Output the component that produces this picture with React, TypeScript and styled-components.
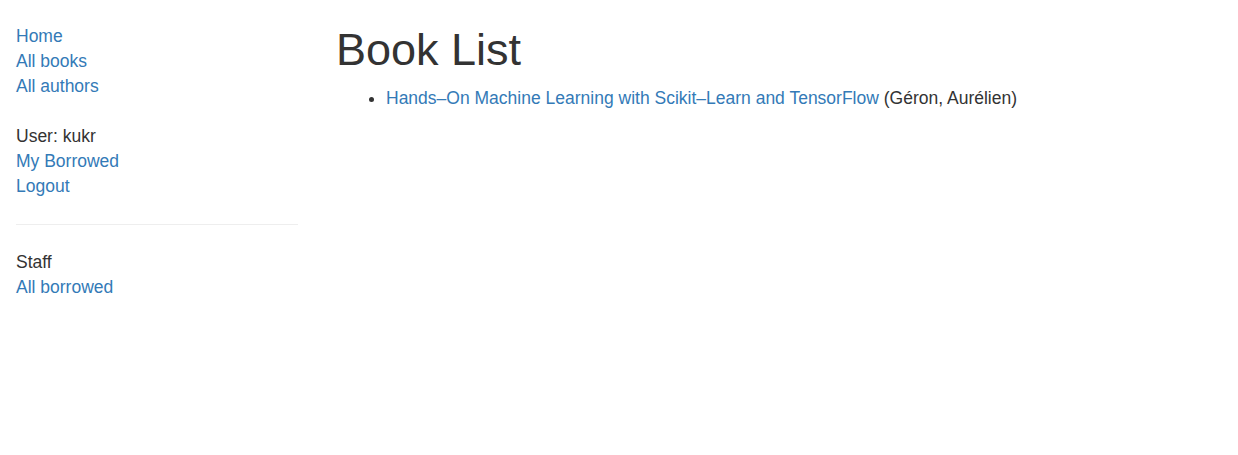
import styled, { createGlobalStyle } from "styled-components";

const GlobalStyle = createGlobalStyle`
  body {
    margin: 0;
    background: #fff;
    color: #333;
    font-family: "Liberation Sans", Arial, sans-serif;
    font-size: 17.5px;
    line-height: 25px;
  }
`;

const Page = styled.div`
  display: flex;
  align-items: flex-start;
`;

const Sidebar = styled.nav`
  width: 282px;
  margin-left: 16px;
  padding-top: 24px;
  flex-shrink: 0;
`;

const NavList = styled.ul`
  list-style: none;
  margin: 0;
  padding: 0;
`;

const Gap = styled.li`
  height: 25px;
`;

const NavLink = styled.a`
  color: #337ab7;
  text-decoration: none;
`;

const Divider = styled.hr`
  margin: 25px 0;
  border: 0;
  border-top: 1px solid #eee;
`;

const Main = styled.main`
  margin-left: 38px;
  flex: 1;
`;

const Title = styled.h1`
  margin: 25px 0 11.5px;
  font-size: 45px;
  font-weight: 500;
  line-height: 49.5px;
`;

const Books = styled.ul`
  margin: 0;
  padding-left: 50px;
`;

const Author = styled.span`
  color: #333;
`;

export default function App() {
  return (
    <>
      <GlobalStyle />
      <Page>
        <Sidebar>
          <NavList>
            <li><NavLink href="#">Home</NavLink></li>
            <li><NavLink href="#">All books</NavLink></li>
            <li><NavLink href="#">All authors</NavLink></li>
            <Gap />
            <li>User: kukr</li>
            <li><NavLink href="#">My Borrowed</NavLink></li>
            <li><NavLink href="#">Logout</NavLink></li>
          </NavList>
          <Divider />
          <NavList>
            <li>Staff</li>
            <li><NavLink href="#">All borrowed</NavLink></li>
          </NavList>
        </Sidebar>
        <Main>
          <Title>Book List</Title>
          <Books>
            <li>
              <NavLink href="#">Hands–On Machine Learning with Scikit–Learn and TensorFlow</NavLink>{" "}
              <Author>(Géron, Aurélien)</Author>
            </li>
          </Books>
        </Main>
      </Page>
    </>
  );
}
